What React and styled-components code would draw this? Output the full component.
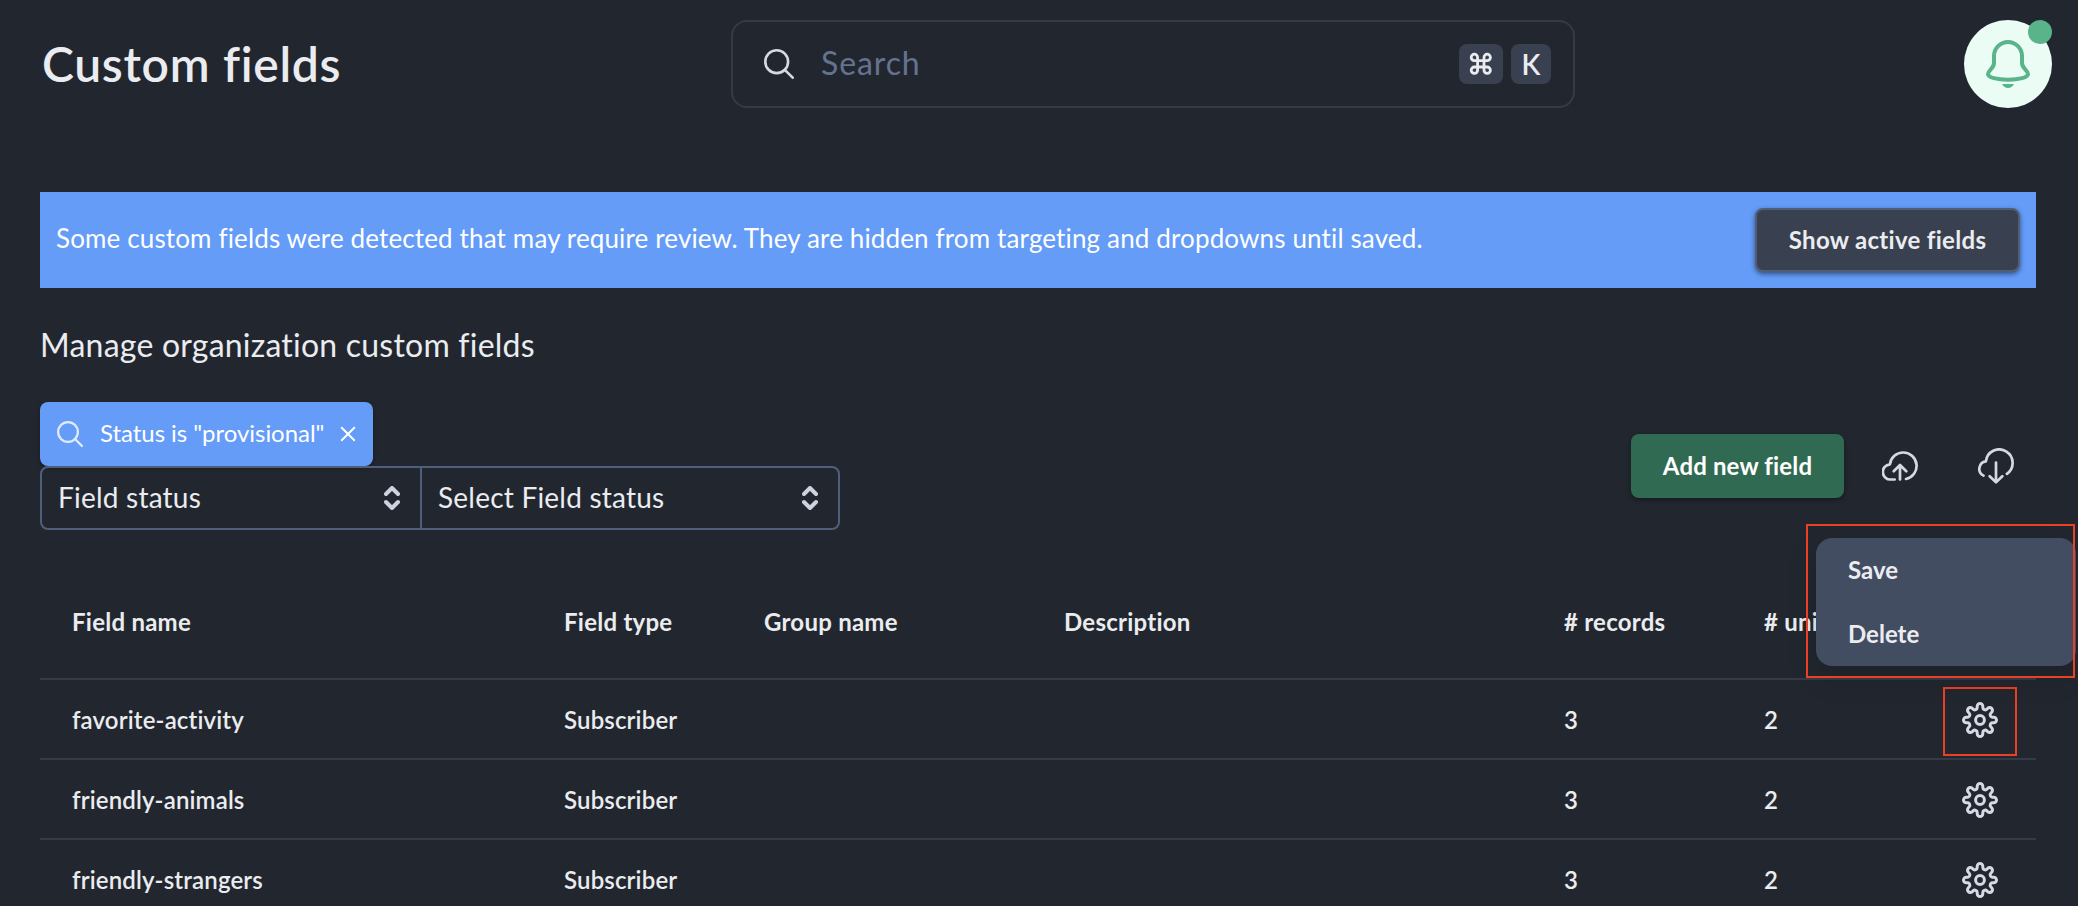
import React from "react";
import { Command } from "lucide-react";
import styled, { createGlobalStyle } from "styled-components";

const fields = [
  { name: "favorite-activity", type: "Subscriber", records: 3, unique: 2, active: true },
  { name: "friendly-animals", type: "Subscriber", records: 3, unique: 2 },
  { name: "friendly-strangers", type: "Subscriber", records: 3, unique: 2 },
];

// outline of a cog with eight rounded teeth on a 36x36 grid
const cogPath = () => {
  const point = (angle, along, across) => {
    const a = (angle * Math.PI) / 180;
    const x = 18 + along * Math.sin(a) + across * Math.cos(a);
    const y = 18 - along * Math.cos(a) + across * Math.sin(a);
    return `${x.toFixed(2)} ${y.toFixed(2)}`;
  };
  let d = `M${point(0, 12.4, -2.8)}`;
  for (let angle = 0; angle < 360; angle += 45) {
    d += `L${point(angle, 13.7, -2.8)}`;
    d += `A2.8 2.8 0 0 1 ${point(angle, 13.7, 2.8)}`;
    d += `L${point(angle, 12.4, 2.8)}`;
    d += `C${point(angle, 10.5, 2.8)} ${point(angle + 45, 10.5, -2.8)} ${point(angle + 45, 12.4, -2.8)}`;
  }
  return d + "Z";
};

const cog = cogPath();

function SearchIcon() {
  return (
    <StrokeIcon viewBox="0 0 30 30" $width={2.6}>
      <circle cx="12.7" cy="12.7" r="11.4" />
      <path d="M20.8 20.8l7.9 7.9" />
    </StrokeIcon>
  );
}

function BellIcon() {
  return (
    <svg width="44" height="48" viewBox="0 0 44 48" fill="none">
      <path
        d="M8 16a14 14 0 0 1 28 0v7c0 5.5 6 7.2 6 11 0 3.5-9 5.7-20 5.7S2 37.5 2 34c0-3.8 6-5.5 6-11z"
        stroke="#59b38b"
        strokeWidth="4"
      />
      <path d="M16 44h12c-1.5 2.6-3.5 4-6 4s-4.5-1.4-6-4z" fill="#59b38b" />
    </svg>
  );
}

function UploadIcon() {
  return (
    <StrokeIcon viewBox="0 0 36 36" $width={2.7}>
      <path d="M12.7 31.5H9A7.6 7.6 0 0 1 7.9 16.3A13.4 13.4 0 1 1 24 31" />
      <path d="M18 31.5V17M11.7 23.3L18 17l6.3 6.3" />
    </StrokeIcon>
  );
}

function DownloadIcon() {
  return (
    <StrokeIcon viewBox="0 0 36 36" $width={2.7}>
      <path d="M5.5 27.6A7.6 7.6 0 0 1 7.9 13.3A13.4 13.4 0 1 1 28.9 25.8" />
      <path d="M18 14.5V34.3M11.7 28.3L18 34.4l6.3-6.1" />
    </StrokeIcon>
  );
}

function GearIcon() {
  return (
    <StrokeIcon viewBox="0 0 36 36" $width={3}>
      <path d={cog} />
      <circle cx="18" cy="18" r="4.4" />
    </StrokeIcon>
  );
}

function Chevrons() {
  return (
    <svg width="16" height="24" viewBox="0 0 16 24" fill="none">
      <path
        d="M2 8l6-6 6 6M2 16l6 6 6-6"
        stroke="#ced2de"
        strokeWidth="4"
        strokeLinecap="round"
        strokeLinejoin="round"
      />
    </svg>
  );
}

function App() {
  return (
    <Page>
      <GlobalStyle />
      <Header>
        <Title>Custom fields</Title>
        <SearchBox>
          <IconBox $size={30}>
            <SearchIcon />
          </IconBox>
          <Placeholder>Search</Placeholder>
          <Key $width={44}>
            <Command size={25.6} strokeWidth={2.6} />
          </Key>
          <Key $width={40}>K</Key>
        </SearchBox>
        <Notifications>
          <BellIcon />
          <Dot />
        </Notifications>
      </Header>

      <Content>
        <Banner>
          <BannerText>
            Some custom fields were detected that may require review. They are
            hidden from targeting and dropdowns until saved.
          </BannerText>
          <BannerButton>Show active fields</BannerButton>
        </Banner>

        <SubTitle>Manage organization custom fields</SubTitle>

        <Toolbar>
          <Filters>
            <Chip>
              <IconBox $size={26}>
                <SearchIcon />
              </IconBox>
              <ChipText>Status is "provisional"</ChipText>
              <svg width="16" height="16" viewBox="0 0 16 16" fill="none">
                <path d="M1.2 1.2l13.6 13.6M14.8 1.2L1.2 14.8" stroke="#fff" strokeWidth="2" />
              </svg>
            </Chip>
            <Selects>
              <Select $width={378}>
                <SelectText>Field status</SelectText>
                <Chevrons />
              </Select>
              <Select $width={418}>
                <SelectText>Select Field status</SelectText>
                <Chevrons />
              </Select>
            </Selects>
          </Filters>
          <Actions>
            <AddButton>Add new field</AddButton>
            <IconBox $size={36}>
              <UploadIcon />
            </IconBox>
            <IconBox $size={36}>
              <DownloadIcon />
            </IconBox>
          </Actions>
        </Toolbar>

        <Table>
          <HeadRow>
            <Cell>Field name</Cell>
            <Cell>Field type</Cell>
            <Cell>Group name</Cell>
            <Cell>Description</Cell>
            <Cell># records</Cell>
            <Cell># unique</Cell>
          </HeadRow>
          {fields.map((field) => (
            <Row key={field.name}>
              <Cell>{field.name}</Cell>
              <Cell>{field.type}</Cell>
              <Cell />
              <Cell />
              <Cell>{field.records}</Cell>
              <Cell>{field.unique}</Cell>
              <Settings>
                <GearIcon />
                {field.active && <GearFrame />}
              </Settings>
            </Row>
          ))}
        </Table>
      </Content>

      <Menu>
        <MenuItem>Save</MenuItem>
        <MenuItem>Delete</MenuItem>
      </Menu>
      <MenuFrame />
    </Page>
  );
}

export default App;

const GlobalStyle = createGlobalStyle`
  * {
    box-sizing: border-box;
  }

  body {
    margin: 0;
    background-color: #22272f;
    color: #ebecf0;
    font-family: Lato, "Open Sans", sans-serif;
    font-variant-ligatures: none;
  }
`;

const Page = styled.div`
  position: relative;
  width: 2078px;
  height: 906px;
  overflow: hidden;
`;

const Header = styled.div`
  display: grid;
  grid-template-columns: 689px 844px 1fr;
  align-items: center;
  padding: 20px 26px 0 42px;
`;

const Title = styled.h1`
  margin: 0;
  padding-bottom: 2px;
  font-size: 48px;
  font-weight: 600;
  letter-spacing: 0.7px;
  white-space: nowrap;
`;

const SearchBox = styled.div`
  height: 88px;
  display: flex;
  align-items: center;
  gap: 8px;
  padding: 0 22px 0 31px;
  border: 2px solid #343a48;
  border-radius: 16px;
  color: #d5d9e4;
`;

const Placeholder = styled.div`
  flex: 1;
  padding: 0 0 3px 19px;
  color: #64738f;
  font-size: 32px;
  letter-spacing: 0.9px;
`;

const Key = styled.div`
  width: ${(p) => p.$width}px;
  height: 40px;
  display: flex;
  align-items: center;
  justify-content: center;
  padding-bottom: 1px;
  border-radius: 8px;
  background-color: #394150;
  color: #ebecf0;
  font-size: 28px;
  font-weight: 600;
`;

const Notifications = styled.div`
  position: relative;
  justify-self: end;
  width: 88px;
  height: 88px;
  display: flex;
  align-items: center;
  justify-content: center;
  border-radius: 50%;
  background-color: #ebfcf4;
`;

const Dot = styled.div`
  position: absolute;
  top: 0;
  right: 0;
  width: 24px;
  height: 24px;
  border-radius: 50%;
  background-color: #59b38b;
`;

const IconBox = styled.div`
  flex: none;
  width: ${(p) => p.$size}px;
  height: ${(p) => p.$size}px;
  display: flex;
`;

const StrokeIcon = styled.svg`
  width: 100%;
  height: 100%;
  fill: none;
  stroke: currentColor;
  stroke-width: ${(p) => p.$width};
  stroke-linecap: round;
  stroke-linejoin: round;
`;

const Content = styled.div`
  padding: 84px 42px 0 40px;
`;

const Banner = styled.div`
  height: 96px;
  display: flex;
  align-items: center;
  justify-content: space-between;
  padding: 0 16px;
  background-color: #649cf8;
`;

const BannerText = styled.div`
  padding-bottom: 4px;
  color: #fff;
  font-size: 26px;
  letter-spacing: 0.14px;
  white-space: nowrap;
`;

const Button = styled.button`
  height: 64px;
  padding: 0 0 2px;
  border: none;
  border-radius: 8px;
  font-family: inherit;
  font-size: 24px;
  font-weight: 700;
  font-variant-ligatures: none;
  white-space: nowrap;
`;

const BannerButton = styled(Button)`
  width: 265px;
  border: 2px solid #515e78;
  background-color: #394150;
  color: #ebecf0;
  letter-spacing: 0.3px;
  box-shadow: 0 2px 5px rgba(0, 0, 0, 0.5);
`;

const SubTitle = styled.h2`
  margin: 0;
  height: 114px;
  display: flex;
  align-items: center;
  padding-bottom: 2px;
  font-size: 32px;
  font-weight: 400;
  letter-spacing: 0.22px;
`;

const Toolbar = styled.div`
  height: 128px;
  display: flex;
  align-items: center;
  justify-content: space-between;
`;

const Filters = styled.div`
  display: flex;
  flex-direction: column;
  align-items: flex-start;
`;

const Chip = styled.div`
  width: 333px;
  height: 64px;
  display: flex;
  align-items: center;
  padding: 0 17px;
  border-radius: 8px;
  background-color: #649cf8;
  color: #e0ebfe;
  box-shadow: 0 2px 4px rgba(0, 0, 0, 0.35);
`;

const ChipText = styled.div`
  flex: 1;
  padding: 0 0 4px 17px;
  color: #fff;
  font-size: 24px;
  letter-spacing: -0.04px;
  white-space: nowrap;
`;

const Selects = styled.div`
  height: 64px;
  display: flex;
  border: 2px solid #4f5f7b;
  border-radius: 8px;
`;

const Select = styled.div`
  width: ${(p) => p.$width}px;
  display: flex;
  align-items: center;
  justify-content: space-between;
  padding: 0 20px 0 16px;

  & + & {
    border-left: 2px solid #4f5f7b;
  }
`;

const SelectText = styled.div`
  padding-bottom: 3px;
  font-size: 28px;
  letter-spacing: 0.22px;
`;

const Actions = styled.div`
  display: flex;
  align-items: center;
  gap: 60px;
  padding-right: 22px;
  color: #d5d9e4;
`;

const AddButton = styled(Button)`
  width: 213px;
  margin-right: -22px;
  background-color: #316a52;
  color: #fff;
  letter-spacing: 0.15px;
  box-shadow: 0 2px 5px rgba(0, 0, 0, 0.4);
`;

const Table = styled.div`
  margin-top: 34px;
`;

const Row = styled.div`
  height: 80px;
  display: grid;
  grid-template-columns: 492px 200px 300px 500px 200px 198px 1fr;
  align-items: center;
  padding: 2px 0 0 32px;
  border-bottom: 2px solid #343a48;
  font-size: 24px;
  font-weight: 600;
  letter-spacing: 0.15px;
`;

const HeadRow = styled(Row)`
  height: 116px;
  font-weight: 700;
  letter-spacing: 0.25px;
`;

const Cell = styled.div`
  padding-bottom: 2px;
  white-space: nowrap;
`;

const Settings = styled.div`
  position: relative;
  width: 36px;
  height: 36px;
  display: flex;
  color: #d5d9e4;
`;

const Frame = styled.div`
  position: absolute;
  border: 2px solid #ea4025;
`;

const GearFrame = styled(Frame)`
  top: -15px;
  left: -19px;
  width: 74px;
  height: 69px;
`;

const Menu = styled.div`
  position: absolute;
  top: 538px;
  right: 2px;
  width: 260px;
  border-radius: 16px;
  background-color: #434d61;
  box-shadow: 0 10px 30px rgba(0, 0, 0, 0.16);
`;

const MenuItem = styled.div`
  height: 64px;
  display: flex;
  align-items: center;
  padding: 0 32px 2px;
  font-size: 24px;
  font-weight: 700;
`;

const MenuFrame = styled(Frame)`
  top: 524px;
  right: 3px;
  width: 269px;
  height: 154px;
`;
